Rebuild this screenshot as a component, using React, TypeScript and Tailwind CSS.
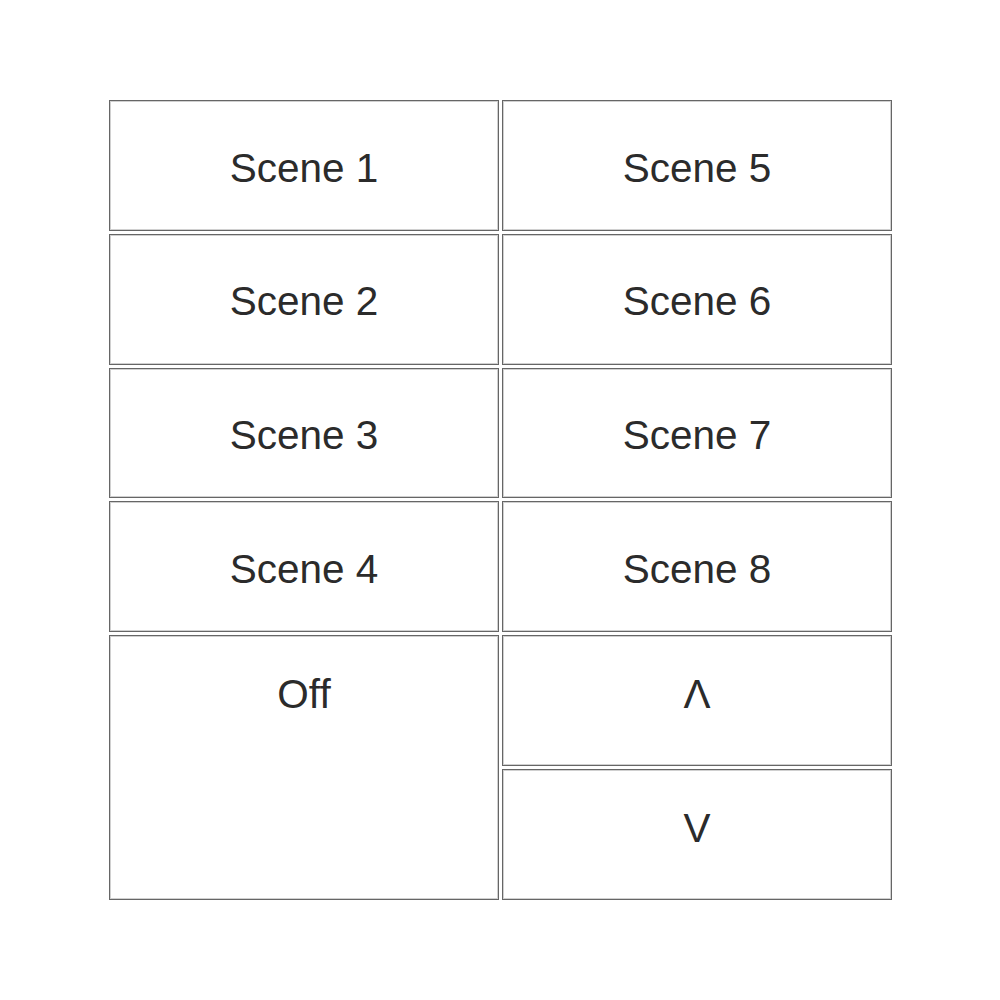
const scenes = ["Scene 1", "Scene 2", "Scene 3", "Scene 4"];
const scenesRight = ["Scene 5", "Scene 6", "Scene 7", "Scene 8"];

const base =
  "flex justify-center border border-[#666] shadow-[inset_0_0_0_1px_#d0d0d0] bg-white text-[40.5px] text-[#2b2b2b]";
const cell = base + " items-center pt-[5px]";
const arrow = base + " items-center pb-[12px]";

export default function App() {
  return (
    <div className="w-[1000px] h-[1000px] bg-white pt-[100px] pl-[109px] font-['Liberation_Sans',Arial,sans-serif]">
      <div className="grid grid-cols-2 grid-rows-6 gap-x-[3px] gap-y-[3px] w-[783px] h-[800px]">
        {scenes.map((s, i) => [
          <button key={s} className={cell}>
            {s}
          </button>,
          <button key={scenesRight[i]} className={cell}>
            {scenesRight[i]}
          </button>,
        ])}
        <button className={base + " row-span-2 items-start pt-[28px]"}>Off</button>
        <button className={arrow}>Λ</button>
        <button className={arrow}>V</button>
      </div>
    </div>
  );
}
